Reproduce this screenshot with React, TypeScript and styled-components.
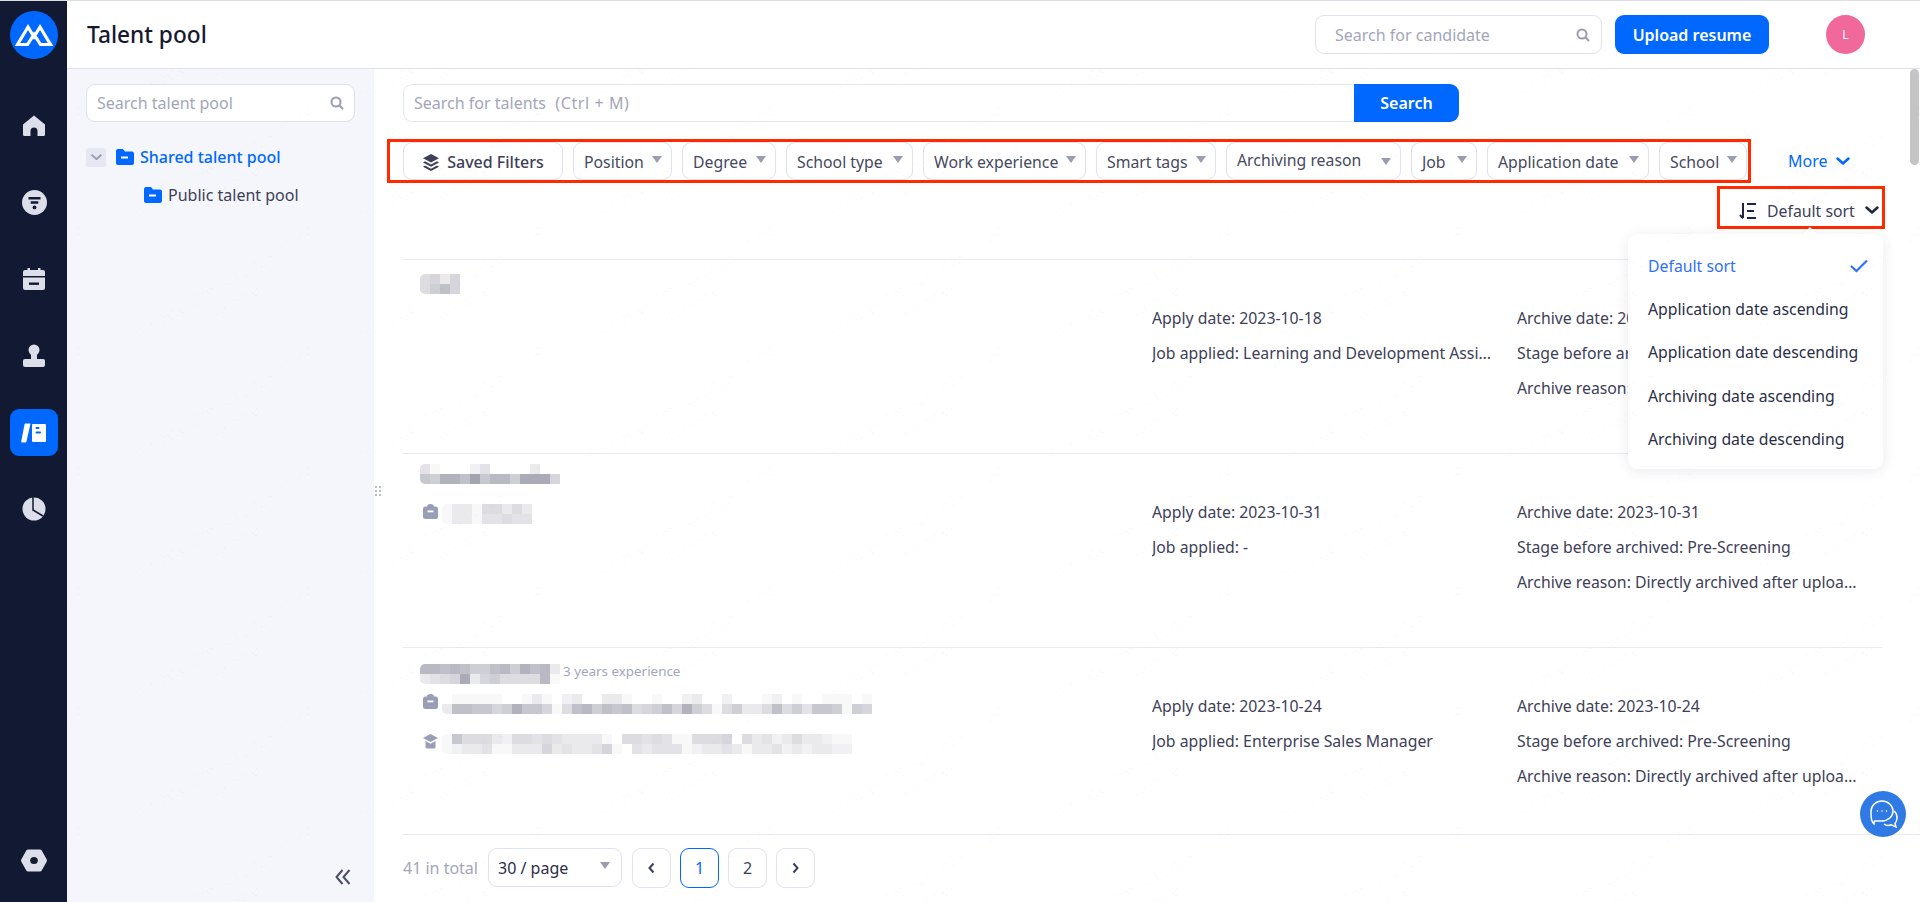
import React from "react";
import styled, { createGlobalStyle } from "styled-components";

const Global = createGlobalStyle`
  html, body { margin: 0; padding: 0; height: 100%; overflow: hidden; background: #fff; }
  * { box-sizing: border-box; }
  body { font-family: "Noto Sans", "Liberation Sans", sans-serif; font-size: 15px; color: #3d4057; }
`;

const Page = styled.div`
  display: flex; width: 1920px; height: 902px; border-top: 1px solid #dcdde2; overflow: hidden;
`;
const Sidebar = styled.nav`
  width: 67px; flex: none; background: #121933; display: flex; flex-direction: column; align-items: center;
  padding: 10px 0 18px 1px;
`;
const LogoMark = styled.div`
  width: 48px; height: 48px; border-radius: 50%; background: #0068ff; display: flex; align-items: center; justify-content: center;
  margin-bottom: 43px;
`;
const NavItem = styled.div<{ $active?: boolean; $bottom?: boolean }>`
  width: 48px; height: 47px; flex: none; border-radius: 9px; display: flex; align-items: center; justify-content: center;
  background: ${p => (p.$active ? "#0068ff" : "transparent")};
  margin-bottom: ${p => (p.$bottom ? 0 : 29.8)}px;
  margin-top: ${p => (p.$bottom ? "auto" : 0)};
`;
const Content = styled.div`
  flex: 1; min-width: 0; display: flex; flex-direction: column;
`;
const Header = styled.header`
  height: 68px; flex: none; border-bottom: 1px solid #dfe1ec; display: flex; align-items: center; padding: 0 55px 0 20px; background: #fff;
`;
const Title = styled.h1`
  margin: 0; font-size: 22.7px; font-weight: 500; color: #151a30; flex: 1; padding-bottom: 1px;
`;
const HeaderSearch = styled.div`
  width: 287px; height: 39px; border: 1px solid #dfe1ec; border-radius: 9px; display: flex; align-items: center; justify-content: space-between;
  padding: 1px 11px 0 19px; color: #a3a6ba; font-size: 16px;
`;
const PrimaryButton = styled.button`
  width: 154px; height: 39px; margin-left: 13px; margin-right: 57px; border: 0; border-radius: 9px; background: #0068ff; color: #fff;
  font: 600 16px "Noto Sans", sans-serif;
`;
const Avatar = styled.div`
  width: 39px; height: 39px; border-radius: 50%; background: #f1689a; color: #fff; font-size: 12px; display: flex; align-items: center; justify-content: center;
`;
const Body = styled.div`
  flex: 1; min-height: 0; display: flex; position: relative; overflow: hidden;
`;
const LeftPanel = styled.aside`
  width: 307px; flex: none; background: #f5f6fb; padding: 15px 19px 0 19px; display: flex; flex-direction: column;
`;
const PanelSearch = styled.div`
  height: 38px; width: 269px; border: 1px solid #dfe1ec; border-radius: 9px; background: #fff; display: flex; align-items: center; justify-content: space-between;
  padding: 0 10px; color: #a3a6ba; font-size: 16px;
`;
const TreeRow = styled.div<{ $indent: number; $active?: boolean; $mt: number }>`
  display: flex; align-items: center; height: 24px; margin-top: ${p => p.$mt}px; padding-left: ${p => p.$indent}px;
  color: ${p => (p.$active ? "#0068ff" : "#3d4057")}; font-size: 16px; font-weight: ${p => (p.$active ? 500 : 400)};
  svg.folder { margin-right: 6px; flex: none; }
`;
const Toggle = styled.span`
  width: 20px; height: 19px; border-radius: 3px; background: #e6e8f1; display: flex; align-items: center; justify-content: center; margin-right: 10px;
`;
const Collapse = styled.div`
  margin-top: auto; margin-bottom: 17px; align-self: flex-end; margin-right: 4px; height: 16px; line-height: 0;
`;
const Main = styled.main`
  flex: 1; min-width: 0; position: relative; display: flex; flex-direction: column; padding: 15px 0 0 29px;
`;
const SearchRow = styled.div`
  display: flex; height: 38px; width: 1056px; flex: none;
`;
const SearchField = styled.div`
  flex: 1; border: 1px solid #e6e8f0; border-right: 0; border-radius: 9px 0 0 9px; display: flex; align-items: center; padding-left: 10px;
  color: #a3a6ba; font-size: 16px; white-space: pre;
`;
const Shortcut = styled.span`
  letter-spacing: 0.6px; margin-left: 1px;
`;
const SearchButton = styled.button`
  width: 105px; border: 0; border-radius: 0 9px 9px 0; background: #0068ff; color: #fff; font: 600 16px "Noto Sans", sans-serif;
`;
const FilterLine = styled.div`
  display: flex; align-items: center; margin: 17px 0 0 -16px; flex: none;
`;
const FilterBox = styled.div`
  border: 3px solid #ff2a00; height: 44px; width: 1364px; padding-left: 13px; display: flex; gap: 10px; flex: none;
`;
const Chip = styled.div<{ $w: number; $lift?: boolean }>`
  width: ${p => p.$w}px; flex: none; height: 38px; border: 1px solid #dfe1ec; border-radius: 9px; background: #fff; display: flex; align-items: center; justify-content: space-between;
  padding: ${p => (p.$lift ? "0 9px 3px 10px" : "2px 9px 0 10px")}; font-size: 15.8px; white-space: nowrap; color: #464a60;
`;
const Caret = styled.i<{ $lift?: boolean }>`
  width: 0; height: 0; border-left: 5.5px solid transparent; border-right: 5.5px solid transparent; border-top: 7px solid #9a9db2;
  margin-top: ${p => (p.$lift ? 3 : -5)}px; flex: none;
`;
const SavedChip = styled(Chip)`
  justify-content: center; gap: 8px; font-weight: 500; font-size: 16px; color: #3d4057;
`;
const MoreLink = styled.div`
  margin-left: 37px; display: flex; align-items: center; gap: 8px; color: #0068ff; font-size: 16px;
`;
const SortLine = styled.div`
  display: flex; justify-content: flex-end; margin: 3px 35px 0 0; flex: none;
`;
const SortBox = styled.div`
  width: 168px; height: 43px; border: 3px solid #ff2a00; display: flex; align-items: center; padding: 6px 3px 0 19px; color: #3d4057; font-size: 15.8px; white-space: nowrap;
  svg:first-child { margin-right: 10px; flex: none; }
  svg:last-child { margin-left: auto; }
`;
const List = styled.div`
  margin: 30px 38px 0 0; flex: 1; min-height: 0; overflow: hidden;
`;
const Row = styled.article<{ $h: number }>`
  height: ${p => p.$h}px; border-top: 1px solid #e8e9f1; display: grid; grid-template-columns: 749px 365px 365px;
`;
const Candidate = styled.div<{ $pt: number }>`
  padding: ${p => p.$pt}px 0 0 17px; display: flex; flex-direction: column;
`;
const NameLine = styled.div`
  display: flex; align-items: flex-start; height: 20px; color: #a3a6ba; font-size: 13.4px; line-height: 14px;
`;
const Experience = styled.span`
  margin-left: 3px;
`;
const InfoLine = styled.div<{ $mt: number }>`
  display: flex; align-items: flex-start; gap: 4px; margin-top: ${p => p.$mt}px; padding-left: 3px;
`;
const MosaicSvg = styled.svg`
  display: block; border-radius: 5px 0 0 5px; flex: none;
`;
const Column = styled.div`
  padding-top: 41px; min-width: 0;
`;
const Line = styled.div`
  height: 35px; line-height: 35px; width: 342px; overflow: hidden; white-space: nowrap; text-overflow: ellipsis; font-size: 15.8px; color: #3d4057;
`;
const Footer = styled.footer`
  height: 68px; flex: none; border-top: 1px solid #e8e9f1; display: flex; align-items: center; padding-bottom: 2px;
`;
const Total = styled.span`
  color: #a3a6ba; font-size: 16px; margin-right: 10px;
`;
const PageSelect = styled.div`
  width: 134px; height: 39px; border: 1px solid #dfe1ec; border-radius: 9px; display: flex; align-items: center; justify-content: space-between; padding: 0 11px 0 9px; font-size: 16px; color: #2a2e47; margin-right: 10px;
`;
const PageButton = styled.div<{ $active?: boolean }>`
  width: 39px; height: 40px; margin-right: 9px; border: 1px solid ${p => (p.$active ? "#0068ff" : "#dfe1ec")}; border-radius: 9px; display: flex; align-items: center; justify-content: center;
  color: ${p => (p.$active ? "#0068ff" : "#3d4057")}; font-size: 16px;
`;
const Menu = styled.ul`
  position: absolute; left: 1254px; top: 165px; width: 255px; height: 235px; margin: 0; padding: 10px 0 0; list-style: none; background: #fff; border-radius: 9px;
  box-shadow: 0 2px 14px rgba(40, 50, 90, 0.1); z-index: 3;
  &::before { content: ""; position: absolute; top: -5px; left: 177px; width: 10px; height: 10px; background: #fff; transform: rotate(45deg); box-shadow: -2px -2px 5px rgba(40,50,90,.05); }
`;
const MenuItem = styled.li<{ $active?: boolean }>`
  height: 43.3px; display: flex; align-items: center; justify-content: space-between; padding: 0 15px 0 20px; font-size: 15.8px; white-space: nowrap; color: ${p => (p.$active ? "#2f6fff" : "#2a2e47")};
`;
const Thumb = styled.div`
  position: absolute; right: 1px; top: 0; width: 9px; height: 96px; border-radius: 5px; background: #c4c4c4; z-index: 4;
`;
const Handle = styled.div`
  position: absolute; left: 1px; top: 417px; display: grid; grid-template-columns: 2px 2px; gap: 2px 2px;
  i { width: 2px; height: 2px; background: #b9bccb; display: block; }
`;
const ChatBubble = styled.div`
  position: absolute; left: 1486px; top: 722px; width: 46px; height: 46px; border-radius: 50%; background: #2f7ae5; display: flex; align-items: center; justify-content: center; z-index: 5;
`;
const Watermarks = styled.div`
  position: absolute; left: -184px; top: -76px; right: 0; bottom: 0; display: grid; grid-template-columns: repeat(10, 230px); grid-auto-rows: 120px; pointer-events: none; z-index: 6;
`;
const Mark = styled.div`
  display: flex; flex-direction: column; align-items: center; justify-content: center; transform: rotate(-30deg); font-size: 16px; line-height: 22px; white-space: nowrap; color: rgba(40, 50, 100, 0.028);
`;

const level = (c: string) => {
  const l = parseInt(c, 16);
  return `rgb(${255 - l * 7},${255 - l * 7},${255 - l * 6})`;
};
const Mosaic = ({ rows }: { rows: string[] }) => (
  <MosaicSvg width={rows[0].length * 10} height={rows.length * 10}>
    {rows.map((r, y) => [...r].map((c, x) => <rect key={`${x}-${y}`} x={x * 10} y={y * 10} width="10" height="10" fill={level(c)} />))}
  </MosaicSvg>
);

const G = "#dcdfe9";
const D = "#121933";
const HomeIcon = () => (
  <svg width="24" height="24" viewBox="0 0 24 24"><path fill={G} d="M12 1.5 23 10.5V20.5a1.5 1.5 0 0 1-1.5 1.5H15.5V17a3.5 3.5 0 0 0-7 0V22H2.5A1.5 1.5 0 0 1 1 20.5V10.5Z" /></svg>
);
const FunnelIcon = () => (
  <svg width="25" height="25" viewBox="0 0 25 25"><circle cx="12.5" cy="12.5" r="12.5" fill={G} /><path fill={D} d="M6.5 7h12v2.4h-12zM8.7 11.3h7.6v2.4H8.7z" /><circle cx="12.5" cy="17.4" r="1.9" fill={D} /></svg>
);
const CalendarIcon = () => (
  <svg width="24" height="24" viewBox="0 0 24 24"><path fill={G} d="M3 3h2.5V1h2.5v2h8V1h2.5v2H21a2 2 0 0 1 2 2v4H1V5a2 2 0 0 1 2-2ZM1 10.5h22V21a2 2 0 0 1-2 2H3a2 2 0 0 1-2-2Z" /><rect x="7" y="15.5" width="10" height="2.4" fill={D} /></svg>
);
const StampIcon = () => (
  <svg width="24" height="24" viewBox="0 0 24 24"><circle cx="12" cy="6" r="5.5" fill={G} /><rect x="9" y="9" width="6" height="7" fill={G} /><rect x="1" y="15" width="22" height="8" rx="2" fill={G} /></svg>
);
const BookIcon = () => (
  <svg width="26" height="20" viewBox="0 0 26 20"><path fill="#fff" d="M4.500.6H9.500L5.400 18.800a1 1 0 0 1-1 .8H1.200a1 1 0 0 1-1-1.200L3.500 1.400A1 1 0 0 1 4.500.6Z" /><rect x="11" y="1" width="14" height="18" rx="1" fill="#fff" /><rect x="14.500" y="4" width="4" height="2" rx="1" fill="#0068ff" /><rect x="14.500" y="8.500" width="5.500" height="2" rx="1" fill="#0068ff" /></svg>
);
const PieIcon = () => (
  <svg width="24" height="24" viewBox="0 0 24 24"><circle cx="12" cy="12" r="11.500" fill={G} /><path fill="none" stroke={D} strokeWidth="1.500" d="M11 0v13l10 6" /></svg>
);
const HexIcon = () => (
  <svg width="26" height="23" viewBox="0 0 26 23"><path fill={G} d="M7 .5h12a2 2 0 0 1 1.700 1L25.500 10a3 3 0 0 1 0 3l-4.800 8.500a2 2 0 0 1-1.700 1H7a2 2 0 0 1-1.700-1L.5 13a3 3 0 0 1 0-3L5.300 1.500A2 2 0 0 1 7 .5Z" /><ellipse cx="13" cy="11.500" rx="3.800" ry="3.500" fill={D} /></svg>
);
const Logo = () => (
  <svg width="38" height="24" viewBox="0 0 38 24" fill="none" stroke="#fff" strokeWidth="3.200" strokeLinejoin="miter"><path d="M2.500 21.500 13 4l6 10 6-10 10.500 17.500H25.500L19 11.500l-6.500 10Z" /></svg>
);
const Magnifier = ({ c = "#9a9db2" }: { c?: string }) => (
  <svg width="14" height="14" viewBox="0 0 14 14" fill="none" stroke={c} strokeWidth="2"><circle cx="6" cy="6" r="4.500" /><path d="m9.500 9.500 3.500 3.500" /></svg>
);
const Folder = () => (
  <svg className="folder" width="18" height="16" viewBox="0 0 18 16"><path fill="#0068ff" d="M2 0h5l2 2.500h7a2 2 0 0 1 2 2V14a2 2 0 0 1-2 2H2a2 2 0 0 1-2-2V2a2 2 0 0 1 2-2Z" /><rect x="5" y="7.500" width="7" height="2" fill="#fff" /></svg>
);
const Chevron = ({ c, w = 14, sw = 2.500 }: { c: string; w?: number; sw?: number }) => (
  <svg width={w} height={w * 0.6} viewBox="0 0 14 8.400" fill="none" stroke={c} strokeWidth={sw} strokeLinecap="round" strokeLinejoin="round"><path d="m1.500 1.500 5.500 5 5.500-5" /></svg>
);
const LayersIcon = () => (
  <svg width="16" height="17" viewBox="0 0 16 17" fill="#3d4057"><path d="M8 0 16 4.300 8 8.600 0 4.300Z" /><path d="M2 7.300 8 10.500l6-3.200 2 1.200-8 4.300L0 8.500Z" /><path d="M2 11.500 8 14.700l6-3.200 2 1.200L8 17 0 12.700Z" /></svg>
);
const SortIcon = () => (
  <svg width="18" height="18" viewBox="0 0 18 18" fill="none" stroke="#1f2440" strokeWidth="2"><path d="M4 1v15M1 13l3 3.300" /><path d="M8 2h9M8 9h7M8 16h9" /></svg>
);
const Check = () => (
  <svg width="18" height="14" viewBox="0 0 18 14" fill="none" stroke="#2f6fff" strokeWidth="2.200"><path d="m1 7 5.500 5L17 1.500" /></svg>
);
const JobIcon = () => (
  <svg width="15" height="15" viewBox="0 0 15 15"><path fill="#9a9db6" d="M4 2.500a3.500 2.500 0 0 1 7 0h1.500a2.500 2.500 0 0 1 2.500 2.500v7.500a2.500 2.500 0 0 1-2.500 2.500h-10A2.500 2.500 0 0 1 0 12.500V5a2.500 2.500 0 0 1 2.500-2.500Z" /><rect x="4.500" y="6.500" width="6" height="1.800" fill="#fff" /></svg>
);
const EduIcon = () => (
  <svg width="15" height="15" viewBox="0 0 15 15" fill="#9a9db6"><path d="M7.500 0 15 4 7.500 8 0 4Z" /><path d="M2.500 7 7.500 9.700 12.500 7v6.500a2 2 0 0 1-1.500 1H4a2 2 0 0 1-1.500-1Z" /></svg>
);
const ChatIcon = () => (
  <svg width="32" height="32" viewBox="0 0 32 32" fill="none" stroke="#fff" strokeWidth="1.500"><path d="M14 3c6 0 11 4.500 11 10s-5 10-11 10H6.500l-.5 3c-2-2-3-3.500-3-13C3 7.500 8 3 14 3Z" transform="translate(1 0)" /><path d="M27 13c2 1.500 3 4 3 6.500 0 3-1 5-2 6l1 3.500-5-2.200c-2 .8-5 .7-7-.8" /><circle cx="10.500" cy="13" r=".8" fill="#fff" stroke="none" /><circle cx="15" cy="13" r=".8" fill="#fff" stroke="none" /><circle cx="19.500" cy="13" r=".8" fill="#fff" stroke="none" /></svg>
);

const filters: { label: string; w: number; lift?: boolean }[] = [
  { label: "Position", w: 99 },
  { label: "Degree", w: 94 },
  { label: "School type", w: 127 },
  { label: "Work experience", w: 163 },
  { label: "Smart tags", w: 120 },
  { label: "Archiving reason", w: 175, lift: true },
  { label: "Job", w: 66 },
  { label: "Application date", w: 162 },
  { label: "School", w: 88 },
];
const sorts = ["Default sort", "Application date ascending", "Application date descending", "Archiving date ascending", "Archiving date descending"];
const nav = [HomeIcon, FunnelIcon, CalendarIcon, StampIcon, BookIcon, PieIcon];
const reason = "Archive reason: Directly archived after upload to the talent pool";

export default function App() {
  return (
    <Page>
      <Global />
      <Sidebar>
        <LogoMark><Logo /></LogoMark>
        {nav.map((I, i) => (
          <NavItem key={i} $active={i === 4}><I /></NavItem>
        ))}
        <NavItem $bottom><HexIcon /></NavItem>
      </Sidebar>
      <Content>
        <Header>
          <Title>Talent pool</Title>
          <HeaderSearch>Search for candidate<Magnifier /></HeaderSearch>
          <PrimaryButton>Upload resume</PrimaryButton>
          <Avatar>L</Avatar>
        </Header>
        <Body>
          <LeftPanel>
            <PanelSearch>Search talent pool<Magnifier /></PanelSearch>
            <TreeRow $indent={0} $active $mt={23}>
              <Toggle><Chevron c="#9a9db2" w={11} /></Toggle>
              <Folder />Shared talent pool
            </TreeRow>
            <TreeRow $indent={58} $mt={14}><Folder />Public talent pool</TreeRow>
            <Collapse>
              <svg width="16" height="16" viewBox="0 0 16 16" fill="none" stroke="#4b4f68" strokeWidth="2"><path d="M7.500 1 1.500 8l6 7M14.500 1l-6 7 6 7" /></svg>
            </Collapse>
          </LeftPanel>
          <Main>
            <Thumb />
            <Handle>{Array.from({ length: 6 }, (_, i) => <i key={i} />)}</Handle>
            <SearchRow>
              <SearchField>Search for talents  <Shortcut>(Ctrl + M)</Shortcut></SearchField>
              <SearchButton>Search</SearchButton>
            </SearchRow>
            <FilterLine>
              <FilterBox>
                <SavedChip $w={160}><LayersIcon />Saved Filters</SavedChip>
                {filters.map(f => (
                  <Chip key={f.label} $w={f.w} $lift={f.lift}>{f.label}<Caret $lift={f.lift} /></Chip>
                ))}
              </FilterBox>
              <MoreLink>More<Chevron c="#0068ff" /></MoreLink>
            </FilterLine>
            <SortLine>
              <SortBox><SortIcon />Default sort<Chevron c="#1f2440" /></SortBox>
            </SortLine>
            <List>
              <Row $h={194}>
                <Candidate $pt={14}>
                  <NameLine><Mosaic rows={["5636", "57960"]} /></NameLine>
                </Candidate>
                <Column>
                  <Line>Apply date: 2023-10-18</Line>
                  <Line>Job applied: Learning and Development Assistant Manager</Line>
                </Column>
                <Column>
                  <Line>Archive date: 2023-10-18</Line>
                  <Line>Stage before archived: Pre-Screening</Line>
                  <Line>{reason}</Line>
                </Column>
              </Row>
              <Row $h={194}>
                <Candidate $pt={10}>
                  <NameLine><Mosaic rows={["41000240000300", "87bb9d8aa7ccc6"]} /></NameLine>
                  <InfoLine $mt={20}><JobIcon /><Mosaic rows={["133155353", "133144544"]} /></InfoLine>
                </Candidate>
                <Column>
                  <Line>Apply date: 2023-10-31</Line>
                  <Line>Job applied: -</Line>
                </Column>
                <Column>
                  <Line>Archive date: 2023-10-31</Line>
                  <Line>Stage before archived: Pre-Screening</Line>
                  <Line>{reason}</Line>
                </Column>
              </Row>
              <Row $h={186}>
                <Candidate $pt={16}>
                  <NameLine>
                    <Mosaic rows={["aa9a9779a7b9a3", "3456c3675555a1"]} />
                    <Experience>3 years experience</Experience>
                  </NameLine>
                  <InfoLine $mt={10}>
                    <JobIcon />
                    <Mosaic rows={["0111110013102300331001002300200012010011101", "3998867b886159a798956796b751573359574887176".slice(0, 43)]} />
                  </InfoLine>
                  <InfoLine $mt={20}>
                    <EduIcon />
                    <Mosaic rows={["18555325545433331055454115556053423533211", "12334113336343346104344412334313342323322"]} />
                  </InfoLine>
                </Candidate>
                <Column>
                  <Line>Apply date: 2023-10-24</Line>
                  <Line>Job applied: Enterprise Sales Manager</Line>
                </Column>
                <Column>
                  <Line>Archive date: 2023-10-24</Line>
                  <Line>Stage before archived: Pre-Screening</Line>
                  <Line>{reason}</Line>
                </Column>
              </Row>
            </List>
            <Footer>
              <Total>41 in total</Total>
              <PageSelect>30 / page<Caret /></PageSelect>
              <PageButton>
                <svg width="9" height="12" viewBox="0 0 9 12" fill="none" stroke="#3d4057" strokeWidth="2"><path d="M6.500 1.500 2.500 6l4 4.500" /></svg>
              </PageButton>
              <PageButton $active>1</PageButton>
              <PageButton>2</PageButton>
              <PageButton>
                <svg width="9" height="12" viewBox="0 0 9 12" fill="none" stroke="#3d4057" strokeWidth="2"><path d="M2.500 1.500 6.500 6l-4 4.500" /></svg>
              </PageButton>
            </Footer>
            <Menu>
              {sorts.map((s, i) => (
                <MenuItem key={s} $active={i === 0}>{s}{i === 0 && <Check />}</MenuItem>
              ))}
            </Menu>
            <ChatBubble><ChatIcon /></ChatBubble>
          </Main>
          <Watermarks>
            {Array.from({ length: 80 }, (_, i) => (
              <Mark key={i}><span>lixingwei@moka 2023-11-09</span><span>lixingwei</span></Mark>
            ))}
          </Watermarks>
        </Body>
      </Content>
    </Page>
  );
}
